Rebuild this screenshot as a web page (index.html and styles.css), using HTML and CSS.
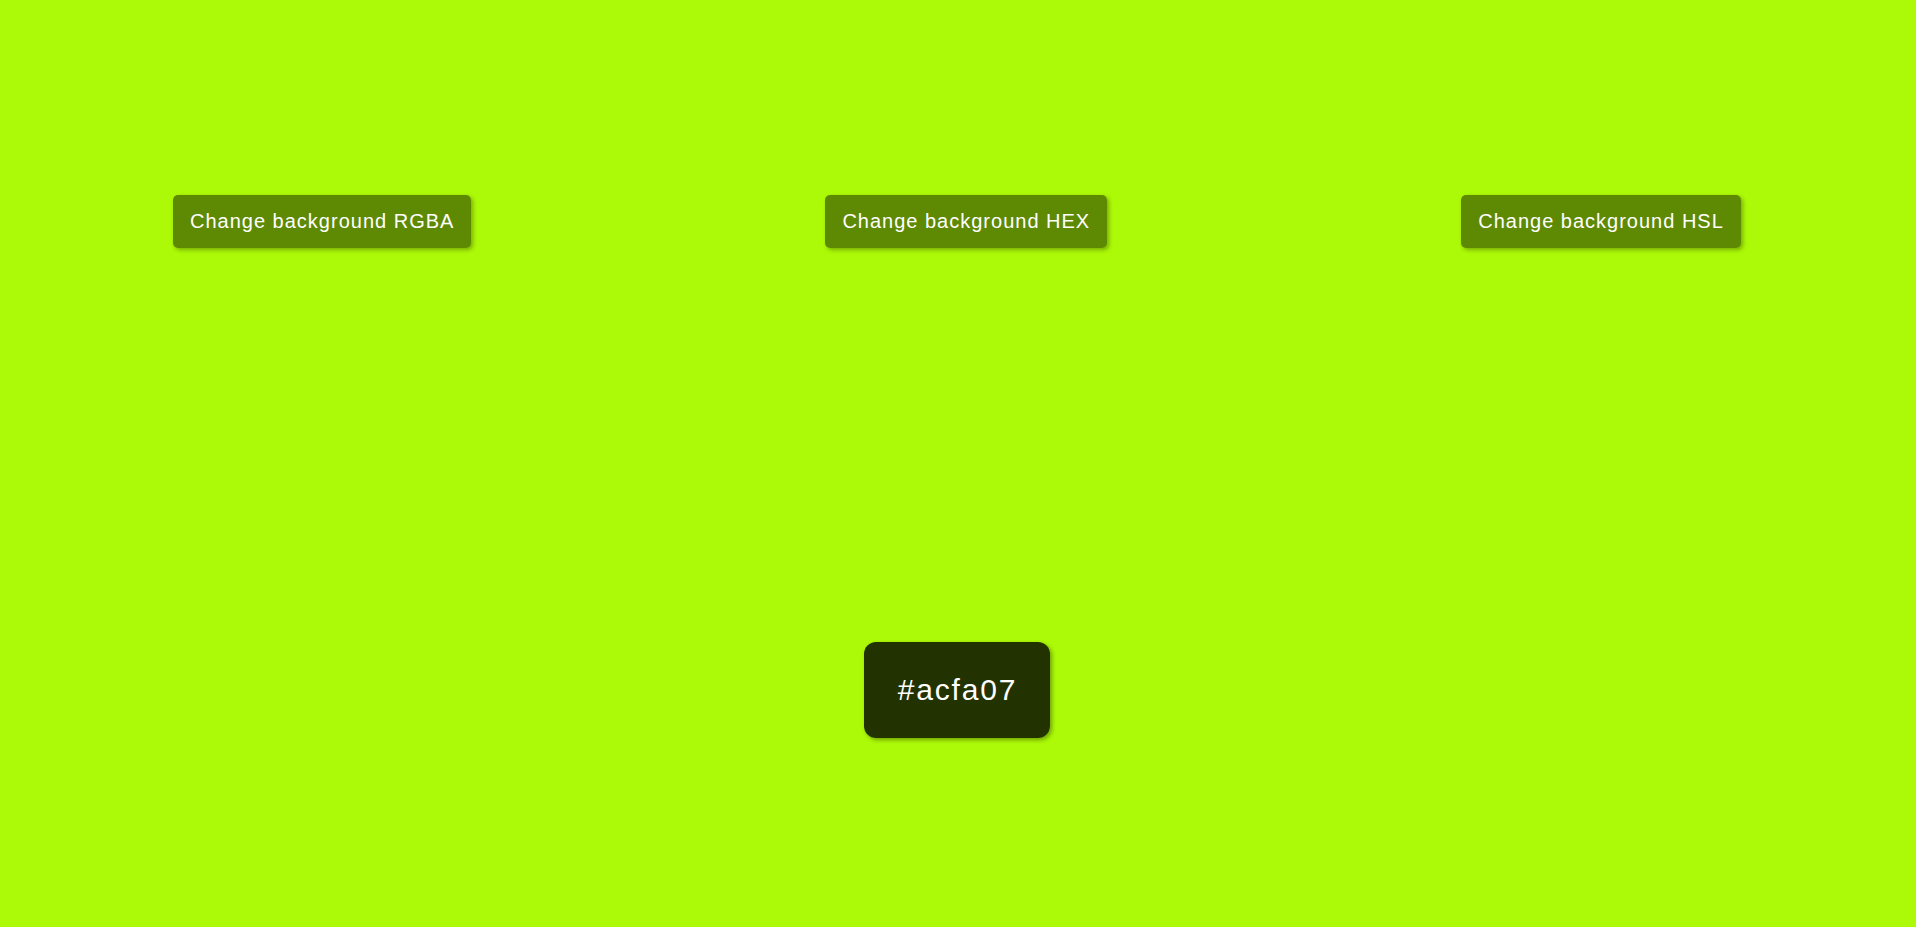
FILE: index.html
```html
<!DOCTYPE html>
<html lang="en">
<head>
<meta charset="utf-8">
<title>Background changer</title>
<link rel="stylesheet" href="styles.css">
</head>
<body>
<main class="page">
  <div class="controls">
    <button class="btn">Change background RGBA</button>
    <button class="btn">Change background HEX</button>
    <button class="btn">Change background HSL</button>
  </div>
  <div class="display">
    <span class="code">#acfa07</span>
  </div>
</main>
</body>
</html>
```

FILE: styles.css
```css
html, body {
  margin: 0;
  padding: 0;
}
body {
  background: #acfa07;
  font-family: "Liberation Sans", Arial, sans-serif;
  min-height: 100vh;
}
.page {
  display: flex;
  flex-direction: column;
  align-items: center;
  padding-top: 195px;
}
.controls {
  display: flex;
  justify-content: flex-start;
  gap: 354px;
  padding-left: 173px;
  width: 100%;
  box-sizing: border-box;
}
.btn {
  font-family: "Liberation Sans", Arial, sans-serif;
  font-size: 20px;
  line-height: 23px;
  letter-spacing: 1px;
  color: #fff;
  background: rgba(0, 0, 0, 0.45);
  border: none;
  border-radius: 5px;
  padding: 15px 17px 15px 17px;
  box-shadow: 2px 2px 4px rgba(0, 0, 0, 0.3);
  cursor: pointer;
}
.display {
  margin-top: 394px;
  margin-left: -2px;
  background: rgba(0, 0, 0, 0.8);
  border-radius: 12px;
  padding: 32px 33px 32px 34px;
  box-shadow: 2px 2px 4px rgba(0, 0, 0, 0.35);
}
.code {
  display: block;
  color: #fff;
  font-size: 30px;
  line-height: 32px;
  letter-spacing: 1.8px;
}
```
